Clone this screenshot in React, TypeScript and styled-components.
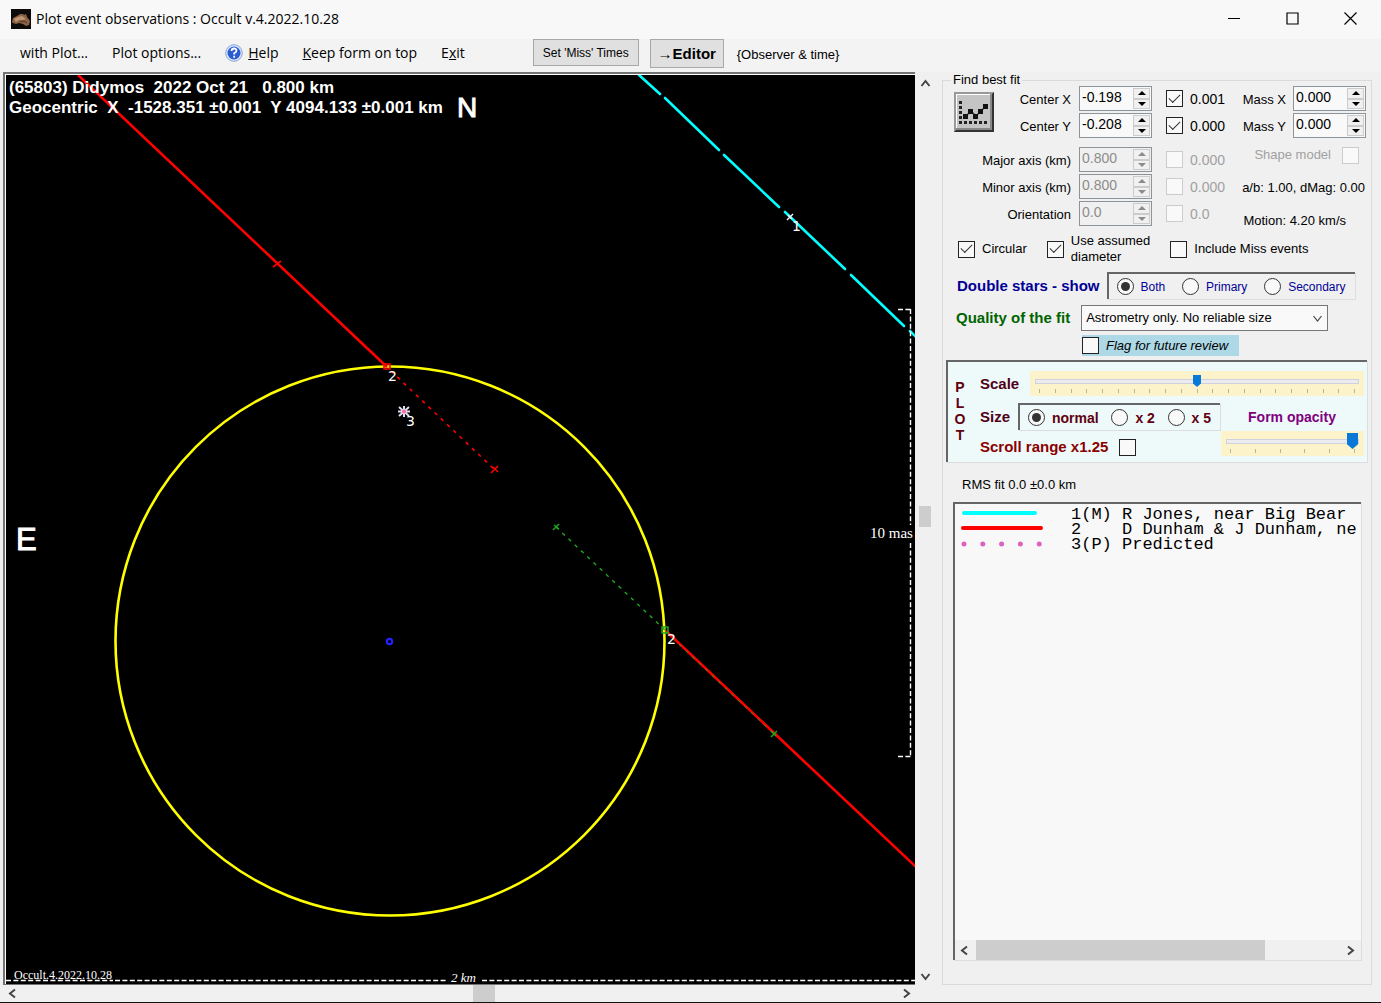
import React from "react";
import styled, { createGlobalStyle, css } from "styled-components";

const sans = '"Liberation Sans", Arial, sans-serif';
const ui = '"Open Sans", "Noto Sans", sans-serif';

const GlobalStyle = createGlobalStyle`
  *, *::before, *::after { box-sizing: border-box; }
  body { margin: 0; background: #f0f0f0; font: 13px/18px ${sans}; color: #000; }
  button, input, select { font: inherit; color: inherit; margin: 0; padding: 0; }
`;

/* ---------- window chrome ---------- */

const Window = styled.div`
  display: flex;
  flex-direction: column;
  min-height: 100vh;
  border-bottom: 1px solid #111;
`;

const TitleBar = styled.header`
  display: flex;
  align-items: center;
  gap: 5px;
  height: 39px;
  padding: 0 4px 2px 11px;
  background: #f8f8f8;
  font: 14px/20px ${ui};
`;

const Title = styled.h1`
  flex: 1;
  margin: 0;
  font: inherit;
`;

const WindowButton = styled.button`
  display: grid;
  place-items: center;
  width: 53px;
  height: 36px;
  border: 0;
  background: none;
`;

const MenuBar = styled.nav`
  display: flex;
  align-items: flex-start;
  height: 33px;
  padding-left: 8px;
  background: #f3f3f3;
`;

const MenuItem = styled.button`
  display: flex;
  align-items: center;
  gap: 5px;
  height: 28px;
  padding: 0 12px;
  border: 0;
  background: none;
  font: 14px/20px ${ui};
  white-space: nowrap;
`;

const ToolButton = styled.button<{ $strong?: boolean }>`
  height: ${(p) => (p.$strong ? 29 : 27)}px;
  width: ${(p) => (p.$strong ? 74 : 106)}px;
  margin-right: 11px;
  border: 1px solid #a8a8a8;
  background: #e0e0e0;
  font: ${(p) => (p.$strong ? "bold 15px" : "12px")} / 18px ${sans};
  white-space: nowrap;
`;

const ToolGroup = styled.div`
  display: flex;
  align-items: flex-start;
  margin-left: 56px;
`;

const ToolNote = styled.span`
  padding: 7px 2px;
`;

const Body = styled.main`
  display: grid;
  grid-template-columns: minmax(0, 1fr) 448px;
  flex: 1;
`;

/* ---------- scroll bars ---------- */

const Bar = styled.div<{ $vertical?: boolean }>`
  display: flex;
  flex-direction: ${(p) => (p.$vertical ? "column" : "row")};
  align-items: center;
  background: #f0f0f0;
`;

const BarButton = styled.button`
  display: grid;
  place-items: center;
  width: 17px;
  height: 17px;
  border: 0;
  background: none;
`;

const BarSpace = styled.div<{ $grow: number }>`
  flex: ${(p) => p.$grow} 1 0;
`;

const BarThumb = styled.div<{ $grow: number; $vertical?: boolean }>`
  flex: ${(p) => p.$grow} 1 0;
  ${(p) => (p.$vertical ? "width: 12px;" : "align-self: stretch;")}
  background: #cdcdcd;
`;

const chevrons = {
  up: "M1.5 8 5.5 3 9.5 8",
  down: "M1.5 3 5.5 8 9.5 3",
  left: "M8 1.5 3 5.5 8 9.5",
  right: "M3 1.5 8 5.5 3 9.5",
};

function Chevron({ to, thin }: { to: keyof typeof chevrons; thin?: boolean }) {
  return (
    <svg width="11" height="11" viewBox="0 0 11 11" fill="none" stroke="#444" strokeWidth={thin ? 1.2 : 2} aria-hidden="true">
      <path d={chevrons[to]} />
    </svg>
  );
}

function ScrollBar({ vertical, parts, className }: { vertical?: boolean; parts: [number, number, number]; className?: string }) {
  return (
    <Bar $vertical={vertical} className={className}>
      <BarButton aria-label={vertical ? "Scroll up" : "Scroll left"}><Chevron to={vertical ? "up" : "left"} /></BarButton>
      <BarSpace $grow={parts[0]} />
      <BarThumb $grow={parts[1]} $vertical={vertical} />
      <BarSpace $grow={parts[2]} />
      <BarButton aria-label={vertical ? "Scroll down" : "Scroll right"}><Chevron to={vertical ? "down" : "right"} /></BarButton>
    </Bar>
  );
}

/* ---------- plot ---------- */

const PlotArea = styled.section`
  display: grid;
  grid-template: minmax(0, 1fr) 17px / minmax(0, 1fr) 18px;
  padding-left: 3px;
`;

const PlotFrame = styled.div`
  display: flex;
  min-height: 400px;
  overflow: hidden;
  border: 2px solid #747474;
  border-width: 2px 0 1px 2px;
  padding: 1px 0 0 1px;
  background: #fff;
`;

const Plot = styled.svg`
  display: block;
  flex: 1;
  width: 100%;
  height: 0;
  min-height: 100%;
  background: #000;
`;

const PlotHeading = styled.text`
  font: bold 17px ${sans};
  white-space: pre;
`;

const PlotBar = styled(ScrollBar)`
  padding: ${(p) => (p.vertical ? "3px 0 0 2px" : "0 0 0 1px")};
`;

const cyanSegments = [
  [639, 75, 660, 94], [665, 98, 719, 150], [724, 155, 779, 207],
  [785, 212, 845, 269], [851, 275, 904, 326], [910, 331, 916, 337],
];

function EventPlot() {
  return (
    <Plot viewBox="6 75 909 909" preserveAspectRatio="xMidYMid slice" role="img" aria-label="Plot of event observations">
      <circle cx="390" cy="641" r="274.5" fill="none" stroke="#ff0" strokeWidth="2.6" />
      <g stroke="#f00" fill="none">
        <path d="M78 75 387 367M666 631 916 867" strokeWidth="2.6" />
        <path d="M391 371 495 470" strokeWidth="1.6" strokeDasharray="3.6 5" />
        <path d="M273 267l8-6M491 473l7-7M493 467l5 5M384 364h6v5h-6z" strokeWidth="1.6" />
      </g>
      <g stroke="#1fa51f" fill="none">
        <path d="M556 527 665 630" strokeWidth="1.4" strokeDasharray="3.6 5" />
        <path d="M666 632 774 734" strokeWidth="1" strokeDasharray="3 6" />
        <path d="M553 530l6-6M554 525l5 4M771 737l6-6M771 731l5 5M662 627h6v6h-6z" strokeWidth="1.5" />
      </g>
      <g stroke="#0ff" strokeWidth="2.6" strokeLinecap="round">
        {cyanSegments.map(([x1, y1, x2, y2]) => <line key={x1} x1={x1} y1={y1} x2={x2} y2={y2} />)}
      </g>
      <circle cx="389.500" cy="641.500" r="2.700" fill="none" stroke="#22f" strokeWidth="2.2" />
      <g stroke="#fff" strokeWidth="1.4" fill="none">
        <path d="M787 220l6-6M788 215l4 4" />
        <path d="M399 407l10 9M399 416l10-9M404 406v11M398 411.500h12" stroke="#dde" strokeWidth="2" />
        <path d="M6 980.500H113M115 980.500H447M482 980.500H915" strokeDasharray="5 2.400" />
        <path d="M898 309.500H911M910.500 309V525M910.500 543V756M898 756.500H911" strokeDasharray="5 2.400" />
      </g>
      <circle cx="404" cy="411.500" r="2" fill="#f6a" />
      <g fill="#fff" fontFamily={sans}>
        <PlotHeading x="9" y="93">{"(65803) Didymos  2022 Oct 21   0.800 km"}</PlotHeading>
        <PlotHeading x="9" y="113">{"Geocentric  X  -1528.351 ±0.001  Y 4094.133 ±0.001 km"}</PlotHeading>
        <text x="457" y="117" fontSize="28" stroke="#fff">N</text>
        <text x="16" y="550" fontSize="31" stroke="#fff">E</text>
      </g>
      <g fill="#fff" fontFamily='"DejaVu Sans", sans-serif' fontSize="14">
        <text x="792" y="231">1</text>
        <text x="388" y="381">2</text>
        <text x="406" y="426">3</text>
        <text x="667" y="644">2</text>
      </g>
      <g fill="#fff" fontFamily='"Liberation Serif", serif' fontSize="15">
        <text x="870" y="538">10 mas</text>
        <text x="14" y="979" fontSize="12">Occult.4.2022.10.28</text>
        <text x="451" y="982" fontSize="13" fontStyle="italic">2 km</text>
      </g>
    </Plot>
  );
}

/* ---------- form controls ---------- */

const Check = styled.input.attrs({ type: "checkbox" })`
  appearance: none;
  display: grid;
  place-items: center;
  flex: none;
  width: 17px;
  height: 17px;
  border: 1px solid #222;
  background: #f9f9f9;
  &:checked::before {
    content: "";
    width: 11px;
    height: 6px;
    border: solid #333;
    border-width: 0 0 1px 1px;
    transform: translateY(-2px) rotate(-45deg);
  }
  &:disabled { border: 1px solid #ccc; }
`;

const Radio = styled.input.attrs({ type: "radio" })`
  appearance: none;
  display: grid;
  place-items: center;
  flex: none;
  width: 17px;
  height: 17px;
  border: 1px solid #333;
  border-radius: 50%;
  background: #f9f9f9;
  &:checked::before {
    content: "";
    width: 9px;
    height: 9px;
    border-radius: 50%;
    background: #333;
  }
`;

const Choice = styled.label<{ $gap?: number; $disabled?: boolean }>`
  display: flex;
  align-items: center;
  gap: ${(p) => p.$gap ?? 7}px;
  white-space: nowrap;
  ${(p) => p.$disabled && "color: #a0a0a0;"}
`;

const SpinBox = styled.span<{ $disabled?: boolean }>`
  display: flex;
  width: 73px;
  height: 25px;
  padding: 1px;
  border: 1px solid #8c9399;
  background: ${(p) => (p.$disabled ? "#f0f0f0" : "#f9f9f9")};
  color: ${(p) => (p.$disabled ? "#8c8c8c" : "#000")};
`;

const SpinInput = styled.input`
  flex: 1;
  min-width: 0;
  padding: 0 0 3px 1px;
  border: 0;
  outline: 0;
  background: none;
  font-size: 14px;
`;

const SpinButtons = styled.span`
  display: flex;
  flex-direction: column;
  width: 17px;
`;

const SpinButton = styled.button<{ $down?: boolean }>`
  display: grid;
  place-items: center;
  flex: 1;
  border: 1px solid #ccc;
  background: #f0f0f0;
  &::before {
    content: "";
    border: solid transparent;
    border-width: 0 4px;
    ${(p) => (p.$down ? "border-top: 4px solid currentColor;" : "border-bottom: 4px solid currentColor;")}
  }
`;

function Spin({ id, value, disabled }: { id: string; value: string; disabled?: boolean }) {
  return (
    <SpinBox $disabled={disabled}>
      <SpinInput id={id} defaultValue={value} disabled={disabled} />
      <SpinButtons>
        <SpinButton aria-label="Increase" disabled={disabled} />
        <SpinButton $down aria-label="Decrease" disabled={disabled} />
      </SpinButtons>
    </SpinBox>
  );
}

/* ---------- side panel ---------- */

const Side = styled.aside`
  display: flex;
  padding: 2px 9px 17px 9px;
`;

const GroupBox = styled.fieldset`
  display: flex;
  flex-direction: column;
  flex: 1;
  min-width: 0;
  margin: 0;
  padding: 0;
  border: 1px solid #dadada;
`;

const GroupTitle = styled.legend`
  margin-left: 8px;
  padding: 0 2px;
  line-height: 12px;
`;

const FitArea = styled.div`
  display: flex;
  justify-content: space-between;
  padding: 0 5px 0 11px;
`;

const FitGrid = styled.div`
  display: grid;
  grid-template-columns: 40px 77px 73px auto;
  grid-template-rows: 25px 25px 5px;
  grid-auto-rows: 25px;
  align-content: start;
  row-gap: 2px;
  align-items: center;
`;

const FitButton = styled.button`
  grid-area: 1 / 1 / 3 / 2;
  display: grid;
  place-items: center;
  width: 40px;
  height: 40px;
  border: 2px solid #333;
  border-color: #999 #333 #333 #999;
  background: #c4c4c4;
  box-shadow: inset -2px -2px #888, inset 1px 1px #fff;
`;

const FitLabel = styled.label<{ $row: number }>`
  grid-area: ${(p) => p.$row} / 1 / auto / 3;
  justify-self: end;
  padding: 3px 0 0;
`;

const FitField = styled.div<{ $row: number }>`
  grid-area: ${(p) => p.$row} / 3;
  margin-left: 8px;
`;

const FitFlag = styled(Choice)<{ $row: number }>`
  grid-area: ${(p) => p.$row} / 4;
  margin-left: 22px;
  font-size: 14px;
`;

const Extras = styled.div`
  display: flex;
  flex-direction: column;
  align-items: flex-end;
  gap: 2px;
`;

const MassRow = styled.div`
  display: flex;
  gap: 7px;
  height: 25px;
  label { padding-top: 5px; }
`;

const ExtraLine = styled.div<{ $inset: number }>`
  display: flex;
  align-items: flex-end;
  height: 24px;
  margin-bottom: 7px;
  padding-right: ${(p) => p.$inset}px;
  white-space: nowrap;
  &:last-child { margin-bottom: 0; }
`;

const OptionRow = styled.div`
  display: flex;
  align-items: center;
  gap: 20px;
  margin-top: 3px;
  padding-left: 15px;
  line-height: 16px;
`;

const StarsRow = styled.div`
  display: flex;
  align-items: center;
  gap: 7px;
  margin-top: 7px;
  padding-left: 14px;
`;

const Heading = styled.label<{ $tone: string; $small?: boolean }>`
  color: ${(p) => p.$tone};
  font-weight: bold;
  font-size: ${(p) => (p.$small ? 14 : 15)}px;
  white-space: nowrap;
`;

const sunken = css`
  border: 2px solid #666;
  border-width: 2px 0 0 2px;
  box-shadow: 1px 1px #ddd;
`;

const RadioBox = styled.div<{ $width: number }>`
  ${sunken}
  display: flex;
  align-items: center;
  justify-content: space-between;
  width: ${(p) => p.$width}px;
  height: 27px;
  padding: 0 9px 0 8px;
`;

const StarChoice = styled(Choice)`
  color: #000096;
  font-size: 12px;
`;

const QualityRow = styled.div`
  display: flex;
  align-items: center;
  gap: 11px;
  margin-top: 6px;
  padding-left: 13px;
`;

const SelectWrap = styled.span`
  display: grid;
  grid-template-columns: 1fr 20px;
  align-items: center;
  width: 247px;
  border: 1px solid #777;
  background: #f9f9f9;
  svg { grid-area: 1 / 2; justify-self: center; pointer-events: none; }
`;

const Select = styled.select`
  grid-area: 1 / 1 / 2 / 3;
  appearance: none;
  height: 24px;
  padding: 0 4px;
  border: 0;
  background: none;
`;

const FlagChoice = styled(Choice)`
  align-self: flex-start;
  width: 157px;
  height: 21px;
  margin: 4px 0 0 139px;
  background: #add8e6;
  font-style: italic;
`;

const PlotPanel = styled.div`
  ${sunken}
  display: grid;
  grid-template-columns: 24px minmax(0, 1fr);
  height: 102px;
  margin: 4px 4px 0 3px;
  background: #eefafa;
`;

const Vertical = styled.div`
  padding-top: 17px;
  color: #600010;
  font: bold 14px/16px ${sans};
  text-align: center;
  span { display: block; }
`;

const PanelRows = styled.div`
  display: grid;
  grid-template-rows: 32px 28px 25px;
  align-items: start;
  padding: 9px 3px 0 8px;
`;

const PanelRow = styled.div<{ $between?: boolean; $low?: boolean }>`
  display: flex;
  align-items: ${(p) => (p.$low ? "flex-end" : "center")};
  ${(p) => p.$between && "justify-content: space-between;"}
`;

const PanelLabel = styled(Heading)`
  width: 38px;
`;

const SizeChoice = styled(Choice)`
  color: #600010;
  font-weight: bold;
  font-size: 14px;
`;

const OpacityTitle = styled(Heading)`
  margin: 0 auto;
`;

const SliderBox = styled.div<{ $width: number; $big?: boolean }>`
  width: ${(p) => p.$width}px;
  height: 25px;
  padding: 2px 5px 0;
  background: #fdf3cb;
  input {
    --w: ${(p) => (p.$big ? 11 : 8)}px;
    --h: ${(p) => (p.$big ? 16 : 12)}px;
  }
`;

const Slider = styled.input.attrs({ type: "range" })`
  appearance: none;
  display: block;
  width: 100%;
  height: 16px;
  background: none;
  &::-webkit-slider-runnable-track {
    height: 5px;
    border: 1px solid #cfd2da;
    background: #ececf0;
  }
  &::-webkit-slider-thumb {
    appearance: none;
    width: var(--w);
    height: var(--h);
    margin-top: calc((3px - var(--h)) / 2);
    background: #0a78d7;
    clip-path: polygon(0 0, 100% 0, 100% 70%, 50% 100%, 0 70%);
  }
`;

const Ticks = styled.div`
  display: flex;
  justify-content: space-between;
  padding: 0 4px;
  span { width: 1px; height: 4px; background: #b9b59a; }
`;

function TickSlider({ id, ticks, value, width, big }: { id: string; ticks: number; value: number; width: number; big?: boolean }) {
  return (
    <SliderBox $width={width} $big={big}>
      <Slider id={id} min={0} max={ticks - 1} defaultValue={value} />
      <Ticks>{Array.from({ length: ticks }, (_, i) => <span key={i} />)}</Ticks>
    </SliderBox>
  );
}

const Rms = styled.p`
  margin: 14px 0 8px 19px;
`;

const ListFrame = styled.div`
  ${sunken}
  display: flex;
  flex-direction: column;
  flex: 1;
  min-width: 0;
  margin: 0 10px 24px;
  overflow: hidden;
  background: #f8f8f8;
`;

const ObserverList = styled.ul`
  flex: 1;
  margin: 0;
  padding: 3px 0 0 5px;
  list-style: none;
  font: 17px/15px "Liberation Mono", monospace;
  white-space: pre;
`;

const Observer = styled.li`
  display: flex;
  gap: 28px;
  height: 15px;
  svg { flex: none; }
`;

const ListBar = styled(ScrollBar)`
  height: 20px;
  padding: 0 2px 0 1px;
`;

const fitRows = [
  { id: "cx", label: "Center X", value: "-0.198", flag: "0.001", row: 1, on: true },
  { id: "cy", label: "Center Y", value: "-0.208", flag: "0.000", row: 2, on: true },
  { id: "major", label: "Major axis (km)", value: "0.800", flag: "0.000", row: 4 },
  { id: "minor", label: "Minor axis (km)", value: "0.800", flag: "0.000", row: 5 },
  { id: "orient", label: "Orientation", value: "0.0", flag: "0.0", row: 6 },
];

function FitGraphic() {
  return (
    <svg width="34" height="34" viewBox="2 3 34 34" aria-hidden="true">
      <path d="M4 9h3v3H4zM4 14h3v3H4zM4 19h3v3H4zM4 24h3v3H4zM4 29h3v3H4zM9 29h3v3H9zM14 29h3v3h-3zM19 29h3v3h-3zM24 29h3v3h-3zM29 29h3v3h-3z" fill="#222" />
      <path d="M11 24l5-5 5 5 10-10" fill="none" stroke="#444" strokeWidth="1.500" />
      <path d="M8 22h5v5H8zM13 17h5v5h-5zM18 22h5v5h-5zM23 17h5v5h-5zM28 12h5v5h-5z" fill="#111" />
    </svg>
  );
}

function AppIcon() {
  return (
    <svg width="20" height="20" viewBox="0 0 20 20" aria-hidden="true">
      <path d="M0 0h20v20H0z" fill="#0c0a0a" />
      <path d="M1 13l1-4 4-2 3-2 3 0 1 1 2-1 1 3 3 4-1 4-3 1-3-2-4-1-3 1-3-1z" fill="#8a6244" />
      <path d="M3 10l4-2 4-1 4 3-3 1-4 0-3 2z" fill="#c09672" />
      <path d="M9 13l4-1 3 2" stroke="#4e3424" fill="none" />
    </svg>
  );
}

function HelpIcon() {
  return (
    <svg width="18" height="18" viewBox="0 0 18 18" aria-hidden="true">
      <circle cx="9" cy="9" r="8.300" fill="#dce8fb" stroke="#8aa6d8" />
      <circle cx="9" cy="9" r="6.500" fill="#2a5bd0" />
      <path d="M6.500 7q.2-2.500 2.600-2.500T11.500 6.700Q11.500 8 9.200 9.200V10.500M9.200 11.800v2" fill="none" stroke="#fff" strokeWidth="1.800" />
    </svg>
  );
}

export default function App() {
  return (
    <Window>
      <GlobalStyle />
      <TitleBar>
        <AppIcon />
        <Title>Plot event observations : Occult v.4.2022.10.28</Title>
        <WindowButton aria-label="Minimize"><svg width="13" height="13"><path d="M0 6.500h12" stroke="#000" /></svg></WindowButton>
        <WindowButton aria-label="Maximize"><svg width="13" height="13"><path d="M1 1h11v11H1z" fill="none" stroke="#000" strokeWidth="1.200" /></svg></WindowButton>
        <WindowButton aria-label="Close"><svg width="13" height="13"><path d="M.5.5l12 12M12.500.5l-12 12" stroke="#000" strokeWidth="1.200" /></svg></WindowButton>
      </TitleBar>
      <MenuBar>
        <MenuItem>with Plot...</MenuItem>
        <MenuItem>Plot options...</MenuItem>
        <MenuItem><HelpIcon /><span><u>H</u>elp</span></MenuItem>
        <MenuItem><span><u>K</u>eep form on top</span></MenuItem>
        <MenuItem><span>E<u>x</u>it</span></MenuItem>
        <ToolGroup>
          <ToolButton>Set 'Miss' Times</ToolButton>
          <ToolButton $strong>→Editor</ToolButton>
          <ToolNote>{"{Observer & time}"}</ToolNote>
        </ToolGroup>
      </MenuBar>
      <Body>
        <PlotArea>
          <PlotFrame><EventPlot /></PlotFrame>
          <PlotBar vertical parts={[415, 21, 442]} />
          <PlotBar parts={[453, 22, 404]} />
        </PlotArea>
        <Side>
          <GroupBox>
            <GroupTitle>Find best fit</GroupTitle>
            <FitArea>
              <FitGrid>
                <FitButton aria-label="Find best fit"><FitGraphic /></FitButton>
                {fitRows.map((r) => (
                  <React.Fragment key={r.id}>
                    <FitLabel htmlFor={r.id} $row={r.row}>{r.label}</FitLabel>
                    <FitField $row={r.row}><Spin id={r.id} value={r.value} disabled={!r.on} /></FitField>
                    <FitFlag $row={r.row} $disabled={!r.on}><Check defaultChecked={r.on} disabled={!r.on} />{r.flag}</FitFlag>
                  </React.Fragment>
                ))}
              </FitGrid>
              <Extras>
                <MassRow><label htmlFor="mx">Mass X</label><Spin id="mx" value="0.000" /></MassRow>
                <MassRow><label htmlFor="my">Mass Y</label><Spin id="my" value="0.000" /></MassRow>
                <ExtraLine $inset={7}><Choice $gap={11} $disabled>Shape model<Check disabled /></Choice></ExtraLine>
                <ExtraLine $inset={1}>a/b: 1.00, dMag: 0.00</ExtraLine>
                <ExtraLine $inset={20}>Motion: 4.20 km/s</ExtraLine>
              </Extras>
            </FitArea>
            <OptionRow>
              <Choice><Check defaultChecked />Circular</Choice>
              <Choice><Check defaultChecked /><span>Use assumed<br />diameter</span></Choice>
              <Choice><Check />Include Miss events</Choice>
            </OptionRow>
            <StarsRow>
              <Heading as="span" $tone="#000096">Double stars - show</Heading>
              <RadioBox $width={248}>
                <StarChoice><Radio name="stars" defaultChecked />Both</StarChoice>
                <StarChoice><Radio name="stars" />Primary</StarChoice>
                <StarChoice><Radio name="stars" />Secondary</StarChoice>
              </RadioBox>
            </StarsRow>
            <QualityRow>
              <Heading htmlFor="quality" $tone="#006400">Quality of the fit</Heading>
              <SelectWrap>
                <Select id="quality"><option>Astrometry only. No reliable size</option></Select>
                <Chevron to="down" thin />
              </SelectWrap>
            </QualityRow>
            <FlagChoice><Check />Flag for future review</FlagChoice>
            <PlotPanel>
              <Vertical><span>P</span><span>L</span><span>O</span><span>T</span></Vertical>
              <PanelRows>
                <PanelRow $between>
                  <PanelLabel htmlFor="scale" $tone="#500018">Scale</PanelLabel>
                  <TickSlider id="scale" ticks={21} value={10} width={334} />
                </PanelRow>
                <PanelRow>
                  <PanelLabel as="span" $tone="#500018">Size</PanelLabel>
                  <RadioBox $width={202}>
                    <SizeChoice><Radio name="size" defaultChecked />normal</SizeChoice>
                    <SizeChoice><Radio name="size" />x 2</SizeChoice>
                    <SizeChoice><Radio name="size" />x 5</SizeChoice>
                  </RadioBox>
                  <OpacityTitle htmlFor="opacity" $tone="#800080" $small>Form opacity</OpacityTitle>
                </PanelRow>
                <PanelRow $between $low>
                  <Choice as="div" $gap={11}>
                    <Heading htmlFor="range" $tone="#8b0000">Scroll range x1.25</Heading>
                    <Check id="range" />
                  </Choice>
                  <TickSlider id="opacity" ticks={6} value={5} width={143} big />
                </PanelRow>
              </PanelRows>
            </PlotPanel>
            <Rms>RMS fit 0.0 ±0.0 km</Rms>
            <ListFrame>
              <ObserverList>
                <Observer>
                  <svg width="83" height="15" aria-hidden="true"><path d="M4 6h71" stroke="#0ff" strokeWidth="4" strokeLinecap="round" /></svg>
                  1(M) R Jones, near Big Bear
                </Observer>
                <Observer>
                  <svg width="83" height="15" aria-hidden="true"><path d="M3 6h78" stroke="#f00" strokeWidth="4" strokeLinecap="round" /></svg>
                  {"2    D Dunham & J Dunham, ne"}
                </Observer>
                <Observer>
                  <svg width="83" height="15" aria-hidden="true"><path d="M4 7h76" stroke="#e060c0" strokeWidth="5" strokeLinecap="round" strokeDasharray="0 18.800" /></svg>
                  3(P) Predicted
                </Observer>
              </ObserverList>
              <ListBar parts={[3, 288, 77]} />
            </ListFrame>
          </GroupBox>
        </Side>
      </Body>
    </Window>
  );
}
